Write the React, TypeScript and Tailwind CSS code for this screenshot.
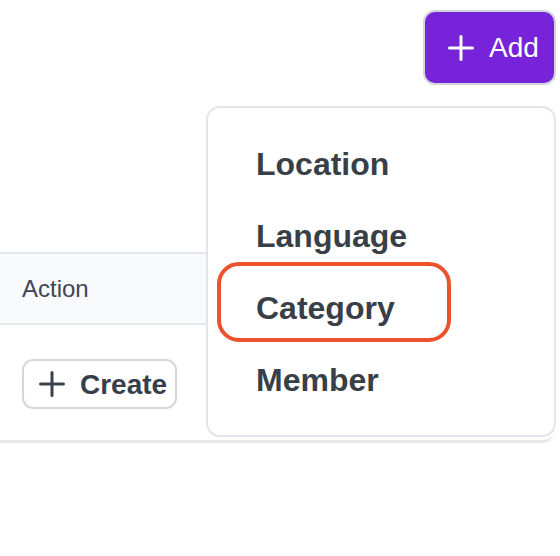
import React from "react";

function PlusIcon({ size, color }: { size: number; color: string }) {
  return (
    <svg width={size} height={size} viewBox="0 0 26 26" fill="none" stroke={color} strokeWidth={3} strokeLinecap="round">
      <path d="M1.5 13h23" />
      <path d="M13 1.5v23" />
    </svg>
  );
}

export default function App() {
  const items = ["Location", "Language", "Category", "Member"];
  return (
    <div
      className="relative w-[560px] h-[556px] bg-white overflow-hidden"
      style={{ fontFamily: '"Liberation Sans", Arial, Helvetica, sans-serif' }}
    >
      <div className="flex justify-end pt-[10px] pr-[4px]">
        <button className="flex items-center gap-[15px] h-[75px] w-[133px] pl-[23px] rounded-[12px] border-2 border-[#d4d4dc] bg-[#7623d9] text-white text-[28px]">
          <PlusIcon size={26} color="#ffffff" />
          <span className="leading-none">Add</span>
        </button>
      </div>

      <div className="mt-[167px] w-[553px] border-b-[3px] border-[#e6e7ec] rounded-br-[10px]">
        <div className="h-[73px] border-y-2 border-[#e5e7eb] bg-[#f9fafb] flex items-center pl-[22px]">
          <span className="text-[24px] text-[#3f4652] leading-none">Action</span>
        </div>
        <div className="h-[115px] flex items-center pl-[22px] pt-[2px]">
          <button className="flex items-center gap-[15px] h-[50px] w-[155px] pl-[15px] rounded-[11px] border-2 border-[#d5d7dd] bg-white">
            <PlusIcon size={26} color="#3a4250" />
            <span className="text-[28px] font-bold text-[#363e4b] leading-none pt-[2px]">Create</span>
          </button>
        </div>
      </div>

      <div className="absolute left-[206px] top-[106px] w-[350px] h-[331px] bg-white border-2 border-[#e4e5ea] rounded-[14px] pt-[20px] pl-[48px]">
        {items.map((it) => (
          <div key={it} className="h-[72px] flex items-center">
            <span className="text-[32px] font-bold text-[#393f47] leading-none">{it}</span>
          </div>
        ))}
      </div>

      <div className="absolute left-[217px] top-[262px] w-[234px] h-[80px] border-[4px] border-[#ea532d] rounded-[22px]" />
    </div>
  );
}
